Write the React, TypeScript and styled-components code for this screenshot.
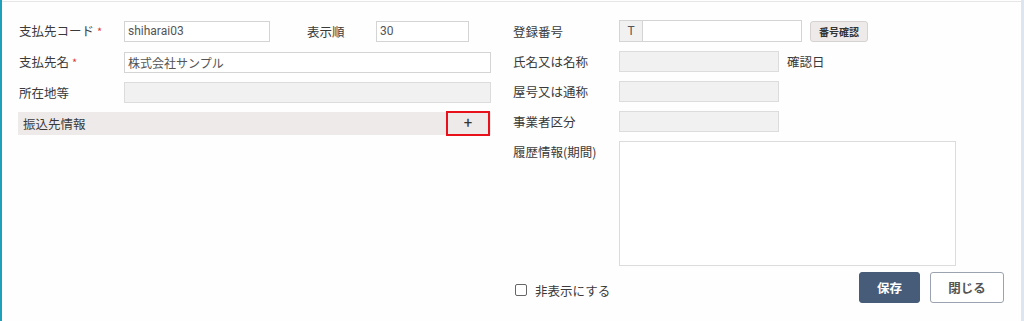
import React from 'react';
import styled, { createGlobalStyle } from 'styled-components';

const GlobalStyle = createGlobalStyle`
  html, body {
    margin: 0;
    padding: 0;
    background: #ffffff;
  }
  body {
    font-family: "Noto Sans CJK JP", "Noto Sans", sans-serif;
    color: #3a3a3a;
  }
`;

const Frame = styled.div`
  width: 1024px;
  height: 321px;
  box-sizing: border-box;
  border-left: 2px solid #1fa0ba;
  border-right: 3px solid #dde5f1;
  background: #fefefe;
  overflow: hidden;
`;

const Panel = styled.div`
  margin-top: 1px;
  border-top: 1px solid #e6e6e6;
  padding: 18px 0 0 16px;
  display: flex;
  gap: 22px;
  height: 100%;
  box-sizing: border-box;
`;

const Column = styled.div<{ $width: number }>`
  width: ${(p) => p.$width}px;
  display: flex;
  flex-direction: column;
  gap: 9px;
`;

const Row = styled.div`
  display: flex;
  align-items: center;
  min-height: 21px;
`;

const TopRow = styled.div`
  display: flex;
  align-items: flex-start;
`;

const Label = styled.label<{ $width: number; $offset?: number }>`
  width: ${(p) => p.$width}px;
  margin-left: ${(p) => p.$offset ?? 1}px;
  flex-shrink: 0;
  font-size: 12.5px;
  line-height: 21px;
  color: #3a3a3a;
  white-space: nowrap;
`;

const Required = styled.span`
  color: #e03a3a;
  margin-left: 3px;
  font-size: 11px;
`;

const Input = styled.input<{ $width: number; $disabled?: boolean }>`
  width: ${(p) => p.$width}px;
  height: 21px;
  box-sizing: border-box;
  border: 1px solid ${(p) => (p.$disabled ? '#dcdcdc' : '#d4d4d4')};
  background: ${(p) => (p.$disabled ? '#f1f1f1' : '#ffffff')};
  padding: 0 3px;
  font-family: "Roboto", "Noto Sans CJK JP", sans-serif;
  font-size: 12px;
  color: #555;
  outline: none;
`;

const InputGroup = styled.div`
  display: flex;
  height: 22px;
  width: 183px;
  box-sizing: border-box;
  border: 1px solid #d4d4d4;
`;

const Prefix = styled.span`
  width: 22px;
  background: #f1f1f1;
  border-right: 1px solid #d4d4d4;
  display: flex;
  align-items: center;
  justify-content: center;
  font-family: "Roboto", sans-serif;
  font-size: 12px;
  color: #555;
`;

const GroupField = styled.input`
  flex: 1;
  border: none;
  outline: none;
  min-width: 0;
`;

const SmallButton = styled.button`
  margin-left: 8px;
  height: 21px;
  width: 58px;
  padding: 0;
  border: 1px solid #d7d2d2;
  border-radius: 3px;
  background: #eeeaea;
  font-family: "Noto Sans CJK JP", sans-serif;
  font-size: 10px;
  font-weight: 700;
  color: #333;
`;

const SideText = styled.span`
  margin-left: 8px;
  font-size: 12.5px;
  color: #3a3a3a;
`;

const SectionBar = styled.div`
  display: flex;
  align-items: center;
  justify-content: space-between;
  height: 23px;
  background: #eeeaea;
  padding-left: 5px;
  font-size: 12.5px;
  color: #3a3a3a;
`;

const AddButton = styled.button`
  width: 44px;
  height: 25px;
  box-sizing: border-box;
  border: 2px solid #e8101a;
  background: transparent;
  font-family: "Roboto", sans-serif;
  font-size: 15px;
  line-height: 1;
  color: #333;
  padding: 0;
  margin-right: 1px;
`;

const TextArea = styled.textarea`
  width: 337px;
  height: 125px;
  box-sizing: border-box;
  border: 1px solid #dcdcdc;
  resize: none;
  outline: none;
`;

const Footer = styled.div`
  display: flex;
  align-items: center;
  justify-content: space-between;
  margin-top: -3px;
`;

const CheckLabel = styled.label`
  display: flex;
  align-items: center;
  gap: 8px;
  margin-left: 2px;
  margin-top: 5px;
  font-size: 12.5px;
  color: #3a3a3a;
`;

const CheckBox = styled.span`
  width: 10px;
  height: 10px;
  border: 1px solid #666;
  border-radius: 2px;
  background: #fff;
`;

const Buttons = styled.div`
  display: flex;
  gap: 10px;
`;

const ActionButton = styled.button<{ $primary?: boolean }>`
  height: 31px;
  width: ${(p) => (p.$primary ? 61 : 74)}px;
  border-radius: 3px;
  border: 1px solid ${(p) => (p.$primary ? '#475c78' : '#9aa3af')};
  background: ${(p) => (p.$primary ? '#475c78' : '#ffffff')};
  color: ${(p) => (p.$primary ? '#ffffff' : '#555')};
  font-family: "Noto Sans CJK JP", sans-serif;
  font-size: 12.5px;
  font-weight: 700;
`;

export default function App() {
  return (
    <>
      <GlobalStyle />
      <Frame>
        <Panel>
          <Column $width={473}>
            <Row>
              <Label $width={105}>
                支払先コード<Required>*</Required>
              </Label>
              <Input $width={146} defaultValue="shiharai03" />
              <Label $width={69} $offset={37}>
                表示順
              </Label>
              <Input $width={93} defaultValue="30" />
            </Row>
            <Row>
              <Label $width={105}>
                支払先名<Required>*</Required>
              </Label>
              <Input $width={367} defaultValue="株式会社サンプル" />
            </Row>
            <Row>
              <Label $width={105}>所在地等</Label>
              <Input $width={367} $disabled readOnly />
            </Row>
            <SectionBar>
              振込先情報
              <AddButton>+</AddButton>
            </SectionBar>
          </Column>
          <Column $width={491}>
            <Row>
              <Label $width={106} $offset={0}>
                登録番号
              </Label>
              <InputGroup>
                <Prefix>T</Prefix>
                <GroupField />
              </InputGroup>
              <SmallButton>番号確認</SmallButton>
            </Row>
            <Row>
              <Label $width={106} $offset={0}>
                氏名又は名称
              </Label>
              <Input $width={160} $disabled readOnly />
              <SideText>確認日</SideText>
            </Row>
            <Row>
              <Label $width={106} $offset={0}>
                屋号又は通称
              </Label>
              <Input $width={160} $disabled readOnly />
            </Row>
            <Row>
              <Label $width={106} $offset={0}>
                事業者区分
              </Label>
              <Input $width={160} $disabled readOnly />
            </Row>
            <TopRow>
              <Label $width={106} $offset={0}>
                履歴情報(期間)
              </Label>
              <TextArea />
            </TopRow>
            <Footer>
              <CheckLabel>
                <CheckBox />
                非表示にする
              </CheckLabel>
              <Buttons>
                <ActionButton $primary>保存</ActionButton>
                <ActionButton>閉じる</ActionButton>
              </Buttons>
            </Footer>
          </Column>
        </Panel>
      </Frame>
    </>
  );
}
